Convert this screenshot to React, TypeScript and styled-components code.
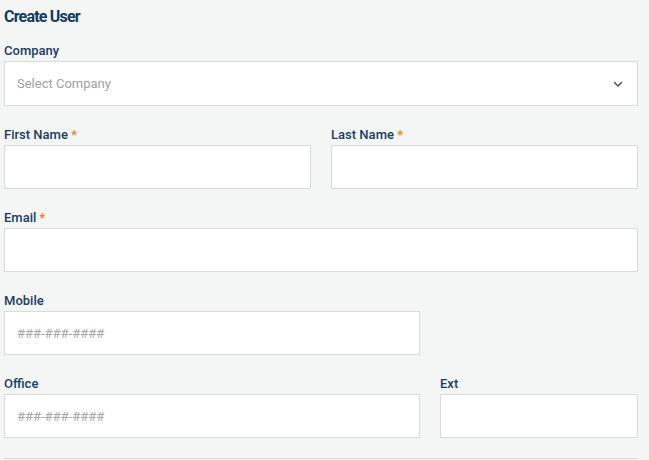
import React from "react";
import styled, { createGlobalStyle } from "styled-components";

const GlobalStyle = createGlobalStyle`
  html, body {
    margin: 0;
    padding: 0;
    background: #f4f5f5;
  }
  body {
    font-family: Roboto, "Noto Sans", "Liberation Sans", sans-serif;
  }
  * {
    box-sizing: border-box;
  }
`;

type FieldProps = {
  label: string;
  required?: boolean;
  placeholder?: string;
  span?: number;
};

const Field = ({ label, required, placeholder, span = 1 }: FieldProps) => (
  <FieldWrapper span={span}>
    <Label>
      {label}
      {required && <Required> *</Required>}
    </Label>
    <Input placeholder={placeholder} />
  </FieldWrapper>
);

const ChevronDown = () => (
  <svg width="12" height="12" viewBox="0 0 12 12" fill="none">
    <path
      d="M2.5 4.5L6 8L9.5 4.5"
      stroke="#555a5f"
      strokeWidth="1.6"
      strokeLinecap="round"
      strokeLinejoin="round"
    />
  </svg>
);

export default function App() {
  return (
    <>
      <GlobalStyle />
      <Page>
        <Title>Create User</Title>
        <Form>
          <Grid columns={1}>
            <FieldWrapper span={1}>
              <Label>Company</Label>
              <Select>
                <SelectPlaceholder>Select Company</SelectPlaceholder>
                <ChevronDown />
              </Select>
            </FieldWrapper>
          </Grid>
          <Grid columns={2}>
            <Field label="First Name" required />
            <Field label="Last Name" required />
          </Grid>
          <Grid columns={1}>
            <Field label="Email" required />
          </Grid>
          <Grid columns={3}>
            <Field label="Mobile" placeholder="###-###-####" span={2} />
          </Grid>
          <Grid columns={3}>
            <Field label="Office" placeholder="###-###-####" span={2} />
            <Field label="Ext" />
          </Grid>
        </Form>
        <Divider />
      </Page>
    </>
  );
}

const Page = styled.div`
  width: 634px;
  margin-left: 4px;
  padding-top: 7px;
`;

const Title = styled.h1`
  margin: 0 0 15px;
  font-size: 16px;
  line-height: 20px;
  font-weight: 700;
  letter-spacing: -0.8px;
  color: #163a5e;
`;

const Form = styled.div`
  display: flex;
  flex-direction: column;
  gap: 20px;
`;

const Grid = styled.div<{ columns: number }>`
  display: grid;
  grid-template-columns: repeat(${(p) => p.columns}, 1fr);
  column-gap: 20px;
`;

const FieldWrapper = styled.div<{ span: number }>`
  grid-column: span ${(p) => p.span};
  display: flex;
  flex-direction: column;
`;

const Label = styled.label`
  font-family: "Roboto Medium", Roboto, "Noto Sans", sans-serif;
  font-size: 13px;
  line-height: 18px;
  font-weight: 500;
  color: #1d3e5e;
  margin-bottom: 1px;
`;

const Required = styled.span`
  color: #f47b20;
`;

const Input = styled.input`
  height: 44px;
  width: 100%;
  border: 1px solid #d9dbdb;
  background: #fff;
  padding: 0 12px;
  font-family: Roboto, "Noto Sans", sans-serif;
  font-size: 13px;
  color: #333;
  outline: none;

  &::placeholder {
    color: #a5a7a9;
  }
`;

const Select = styled.div`
  height: 45px;
  border: 1px solid #d9dbdb;
  background: #fff;
  padding: 0 13px 0 12px;
  display: flex;
  align-items: center;
  justify-content: space-between;
`;

const SelectPlaceholder = styled.span`
  font-size: 13px;
  color: #a0a2a4;
`;

const Divider = styled.div`
  margin-top: 20px;
  height: 1px;
  background: #d9dbdb;
`;
